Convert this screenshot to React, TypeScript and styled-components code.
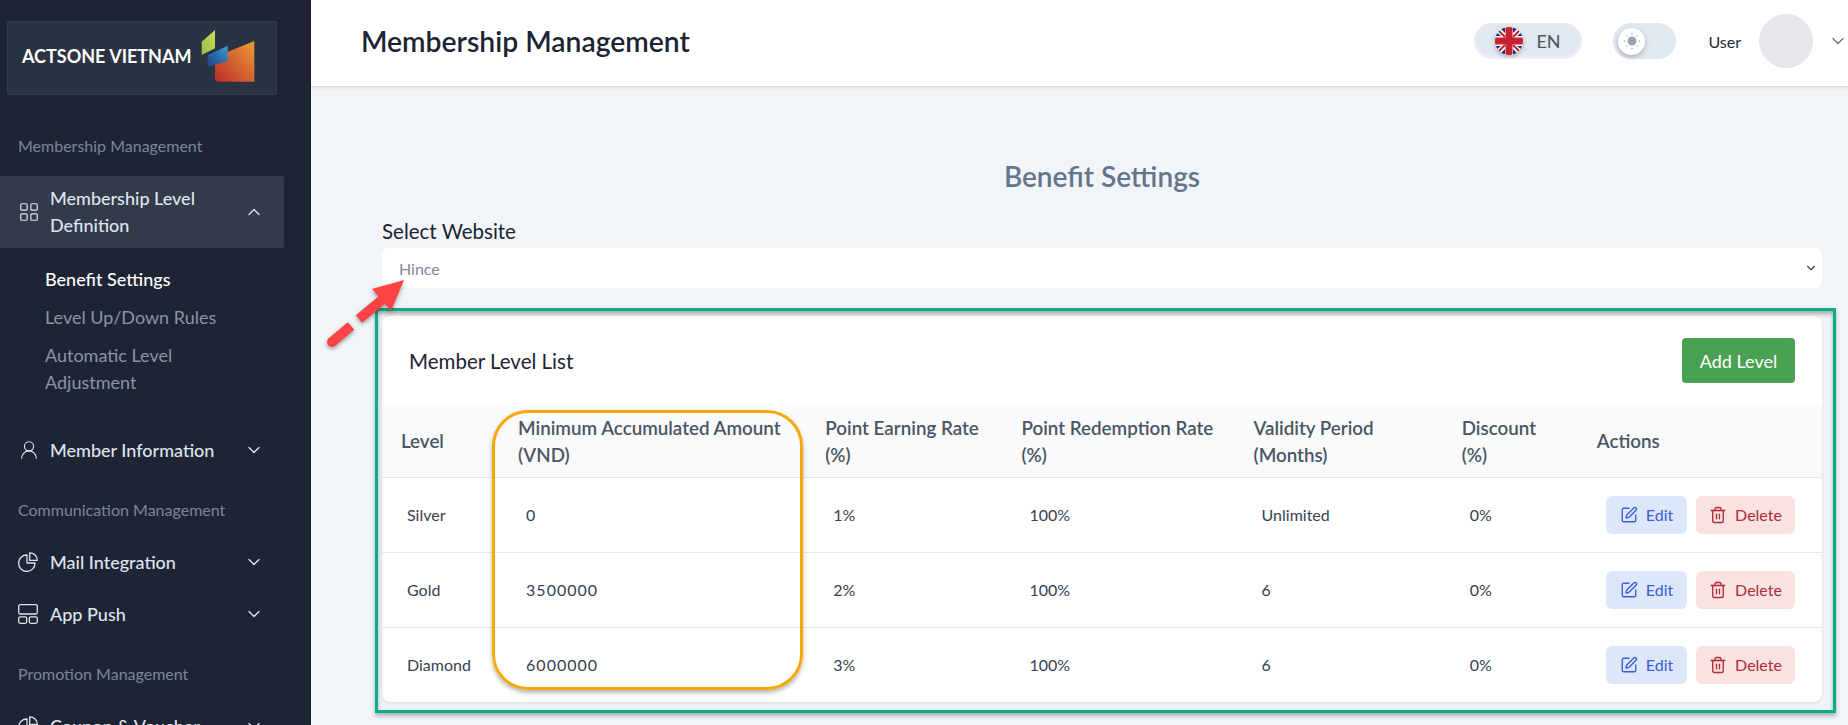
import type { ReactNode } from "react";
import styled, { createGlobalStyle } from "styled-components";
import { ChevronDown, ChevronUp, LayoutGrid, UserRound, SquarePen, Trash2 } from "lucide-react";

const GlobalStyle = createGlobalStyle`
  html, body {
    margin: 0;
    padding: 0;
    height: 725px;
    overflow: hidden;
    background: #f1f5f9;
    font-family: "Lato", "Liberation Sans", sans-serif;
  }
  * { box-sizing: border-box; }
`;

const levels = [
  { name: "Silver", amount: "0", earn: "1%", redeem: "100%", validity: "Unlimited", discount: "0%" },
  { name: "Gold", amount: "3500000", earn: "2%", redeem: "100%", validity: "6", discount: "0%" },
  { name: "Diamond", amount: "6000000", earn: "3%", redeem: "100%", validity: "6", discount: "0%" },
];

const columns = [117, 307, 196, 232, 208, 135, 244];

const Logo = () => (
  <svg width="56" height="56" viewBox="0 0 56 56">
    <defs>
      <linearGradient id="logoBody" x1="0" y1="1" x2="1" y2="0">
        <stop offset="0" stopColor="#b92c2f" />
        <stop offset="1" stopColor="#f09c33" />
      </linearGradient>
      <linearGradient id="logoBlue" x1="0" y1="1" x2="1" y2="0">
        <stop offset="0" stopColor="#1c3f85" />
        <stop offset="1" stopColor="#3f9ad0" />
      </linearGradient>
      <linearGradient id="logoGreen" x1="0" y1="1" x2="1" y2="0">
        <stop offset="0" stopColor="#8fbf45" />
        <stop offset="1" stopColor="#d3dc5c" />
      </linearGradient>
    </defs>
    <path d="M1.7 13.7 L15 2 V20.3 L1.7 27 Z" fill="url(#logoGreen)" />
    <path d="M15 29 L54.3 13 V53.7 H19 Q15 53.7 15 50 Z" fill="url(#logoBody)" />
    <path d="M7.7 27 L27.7 17.7 V33 L7.7 38.7 Z" fill="url(#logoBlue)" />
  </svg>
);

const Flag = () => (
  <svg width="28" height="28" viewBox="0 0 28 28">
    <defs>
      <clipPath id="flagClip"><circle cx="14" cy="14" r="14" /></clipPath>
    </defs>
    <g clipPath="url(#flagClip)">
      <rect width="28" height="28" fill="#fff" />
      <path d="M5 1 L10 6 V1 Z M18 1 V6 L23 1 Z M1 5 V9 L6 9 Z M27 5 L22 9 H27 Z M1 19 V23 L6 19 Z M27 19 H22 L27 23 Z M10 22 L5 27 H10 Z M18 22 V27 H23 Z" fill="#1f2f78" />
      <path d="M1 1 L10 10 M27 1 L18 10 M1 27 L10 18 M27 27 L18 18" stroke="#c8202f" strokeWidth="2" />
      <rect x="10.5" width="7" height="28" fill="#c8202f" />
      <rect y="10.5" width="28" height="7" fill="#c8202f" />
    </g>
  </svg>
);

const Sun = () => (
  <svg width="18" height="18" viewBox="0 0 18 18">
    <circle cx="9" cy="9" r="4.5" fill="#9ca3af" />
    <g fill="#9ca3af">
      <circle cx="9" cy="1.5" r="0.8" /><circle cx="9" cy="16.5" r="0.8" />
      <circle cx="1.5" cy="9" r="0.8" /><circle cx="16.5" cy="9" r="0.8" />
      <circle cx="3.7" cy="3.7" r="0.7" /><circle cx="14.3" cy="3.7" r="0.7" />
      <circle cx="3.7" cy="14.3" r="0.7" /><circle cx="14.3" cy="14.3" r="0.7" />
    </g>
  </svg>
);

const PieIcon = () => (
  <svg width="20" height="20" viewBox="0 0 20 20" fill="none" stroke="currentColor" strokeWidth="1.3" strokeLinejoin="round">
    <path d="M11.7 0.8 A7.6 7.6 0 0 1 19.3 8.4 H11.7 Z" />
    <path d="M9 3 A8.2 8.2 0 1 0 17 11 H9 Z" />
  </svg>
);

const PanelsIcon = () => (
  <svg width="20" height="20" viewBox="0 0 20 20" fill="none" stroke="currentColor" strokeWidth="1.3">
    <rect x="0.7" y="0.7" width="18.6" height="9.3" rx="1.5" />
    <rect x="0.7" y="12.8" width="8" height="6.5" rx="1.5" />
    <rect x="11.3" y="12.8" width="8" height="6.5" rx="1.5" />
  </svg>
);

const NavEntry = ({ icon, label, open, active }: { icon: ReactNode; label: string; open?: boolean; active?: boolean }) => (
  <NavItem $active={active}>
    <NavIcon>{icon}</NavIcon>
    <NavLabel>{label}</NavLabel>
    <NavChevron>{open ? <ChevronUp size={20} strokeWidth={1.6} /> : <ChevronDown size={20} strokeWidth={1.6} />}</NavChevron>
  </NavItem>
);

export default function App() {
  return (
    <Page>
      <GlobalStyle />
      <Sidebar>
        <LogoBox>
          <LogoText>ACTSONE VIETNAM</LogoText>
          <Logo />
        </LogoBox>
        <SectionTitle>Membership Management</SectionTitle>
        <NavEntry active open icon={<LayoutGrid size={22} strokeWidth={1.3} />} label="Membership Level Definition" />
        <SubNav>
          <SubItem $active>Benefit Settings</SubItem>
          <SubItem>Level Up/Down Rules</SubItem>
          <SubItem>Automatic Level Adjustment</SubItem>
        </SubNav>
        <NavEntry icon={<UserRound size={22} strokeWidth={1.3} />} label="Member Information" />
        <SectionTitle $tight>Communication Management</SectionTitle>
        <NavEntry icon={<PieIcon />} label="Mail Integration" />
        <NavEntry icon={<PanelsIcon />} label="App Push" />
        <SectionTitle $tight>Promotion Management</SectionTitle>
        <NavEntry icon={<PieIcon />} label="Coupon & Voucher" />
      </Sidebar>
      <Main>
        <Header>
          <PageTitle>Membership Management</PageTitle>
          <HeaderTools>
            <LangPill>
              <FlagWrap><Flag /></FlagWrap>
              <LangText>EN</LangText>
            </LangPill>
            <ThemeSwitch>
              <ThemeKnob><Sun /></ThemeKnob>
            </ThemeSwitch>
            <UserName>User</UserName>
            <Avatar />
            <UserChevron><ChevronDown size={20} strokeWidth={1.6} /></UserChevron>
          </HeaderTools>
        </Header>
        <Content>
          <Heading>Benefit Settings</Heading>
          <FieldLabel>Select Website</FieldLabel>
          <SelectBox>
            <SelectValue>Hince</SelectValue>
            <ChevronDown size={14} strokeWidth={2} color="#374151" />
          </SelectBox>
          <Card>
            <CardHeader>
              <CardTitle>Member Level List</CardTitle>
              <AddButton>Add Level</AddButton>
            </CardHeader>
            <Table>
              <colgroup>
                {columns.map((w, i) => <col key={i} style={{ width: w }} />)}
              </colgroup>
              <thead>
                <tr>
                  <Th>Level</Th>
                  <Th>Minimum Accumulated Amount (VND)</Th>
                  <Th>Point Earning Rate (%)</Th>
                  <Th>Point Redemption Rate (%)</Th>
                  <Th>Validity Period (Months)</Th>
                  <DiscountTh>Discount (%)</DiscountTh>
                  <Th>Actions</Th>
                </tr>
              </thead>
              <tbody>
                {levels.map((l) => (
                  <tr key={l.name}>
                    <NameCell>{l.name}</NameCell>
                    <AmountCell>{l.amount}</AmountCell>
                    <Td>{l.earn}</Td>
                    <Td>{l.redeem}</Td>
                    <Td>{l.validity}</Td>
                    <Td>{l.discount}</Td>
                    <ActionCell>
                      <EditButton><SquarePen size={18} strokeWidth={1.8} />Edit</EditButton>
                      <DeleteButton><Trash2 size={18} strokeWidth={1.8} />Delete</DeleteButton>
                    </ActionCell>
                  </tr>
                ))}
              </tbody>
            </Table>
          </Card>
        </Content>
      </Main>
      <GreenFrame />
      <OrangeFrame />
      <ArrowMark viewBox="0 0 120 130" width="120" height="130">
        <circle cx="22" cy="82" r="5" fill="#fd4346" />
        <path d="M22 82 L41 66" stroke="#fd4346" strokeWidth="10" fill="none" />
        <path d="M49 59 L73 39" stroke="#fd4346" strokeWidth="10" fill="none" />
        <path d="M94 20 L62 29 L81 51 Z" fill="#fd4346" />
      </ArrowMark>
    </Page>
  );
}

const Page = styled.div`
  display: flex;
  width: 1848px;
  height: 725px;
  overflow: hidden;
  position: relative;
`;

const Sidebar = styled.aside`
  width: 311px;
  flex-shrink: 0;
  background: #1e2434;
  padding-top: 21px;
  overflow: hidden;
`;

const LogoBox = styled.div`
  display: flex;
  align-items: center;
  justify-content: space-between;
  width: 270px;
  height: 74px;
  margin-left: 7px;
  padding: 0 20px 4px 14px;
  background: #2a3342;
  border: 1px solid #333d4d;
  border-radius: 2px;
`;

const LogoText = styled.span`
  color: #fff;
  font-size: 18px;
  font-weight: 700;
  white-space: nowrap;
`;

const SectionTitle = styled.div<{ $tight?: boolean }>`
  color: #7a869c;
  font-size: 16px;
  line-height: 24px;
  padding-left: 18px;
  margin-top: ${(p) => (p.$tight ? "22px" : "39px")};
  margin-bottom: ${(p) => (p.$tight ? "14px" : "18px")};
`;

const NavItem = styled.div<{ $active?: boolean }>`
  display: flex;
  align-items: center;
  width: 284px;
  min-height: ${(p) => (p.$active ? "72px" : "52px")};
  padding-left: 18px;
  padding-right: 20px;
  border-radius: 2px;
  background: ${(p) => (p.$active ? "#333a49" : "transparent")};
  color: #dee4ee;
`;

const NavIcon = styled.span`
  display: flex;
  width: 32px;
  flex-shrink: 0;
`;

const NavLabel = styled.span`
  flex: 1;
  font-size: 18px;
  font-weight: 500;
  line-height: 27px;
`;

const NavChevron = styled.span`
  display: flex;
`;

const SubNav = styled.div`
  display: flex;
  flex-direction: column;
  gap: 11px;
  padding: 18px 60px 28px 45px;
`;

const SubItem = styled.div<{ $active?: boolean }>`
  font-size: 18px;
  line-height: 27px;
  font-weight: ${(p) => (p.$active ? 500 : 400)};
  color: ${(p) => (p.$active ? "#fff" : "#8a94a6")};
`;

const Main = styled.div`
  flex: 1;
  min-width: 0;
  display: flex;
  flex-direction: column;
`;

const Header = styled.header`
  display: flex;
  align-items: center;
  justify-content: space-between;
  height: 86px;
  flex-shrink: 0;
  padding: 0 0 4px 50px;
  background: #fff;
  box-shadow: 0 1px 3px rgba(0, 0, 0, 0.15);
  position: relative;
`;

const PageTitle = styled.h1`
  margin: 0;
  font-size: 28.3px;
  font-weight: 600;
  color: #1c2434;
`;

const HeaderTools = styled.div`
  display: flex;
  align-items: center;
`;

const LangPill = styled.div`
  display: flex;
  align-items: center;
  width: 108px;
  height: 36px;
  padding-left: 21px;
  gap: 13px;
  margin-right: 31px;
  border-radius: 18px;
  background: #e2e8f0;
  box-shadow: inset 0 -2px 4px rgba(255, 255, 255, 0.6);
`;

const FlagWrap = styled.span`
  display: flex;
  border-radius: 50%;
  box-shadow: 0 2px 4px rgba(0, 0, 0, 0.25);
`;

const LangText = styled.span`
  font-size: 18px;
  color: #4b5563;
`;

const ThemeSwitch = styled.div`
  display: flex;
  align-items: center;
  width: 63px;
  height: 36px;
  padding-left: 5px;
  margin-right: 32px;
  border-radius: 18px;
  background: #e2e8f0;
`;

const ThemeKnob = styled.div`
  display: flex;
  align-items: center;
  justify-content: center;
  width: 27px;
  height: 27px;
  border-radius: 50%;
  background: #fff;
  box-shadow: 0 2px 5px rgba(0, 0, 0, 0.25);
`;

const UserName = styled.span`
  font-size: 16px;
  color: #1f2937;
  margin-right: 18px;
`;

const Avatar = styled.div`
  width: 54px;
  height: 54px;
  border-radius: 50%;
  background: #e5e7eb;
  margin-right: 15px;
`;

const UserChevron = styled.span`
  display: flex;
  color: #64748b;
`;

const Content = styled.main`
  flex: 1;
  padding: 73px 26px 0 71px;
`;

const Heading = styled.h2`
  margin: 0 0 26px;
  text-align: center;
  font-size: 28px;
  line-height: 34px;
  font-weight: 600;
  color: #64748b;
`;

const FieldLabel = styled.div`
  font-size: 20.5px;
  line-height: 24px;
  color: #1c2434;
  margin-bottom: 5px;
`;

const SelectBox = styled.div`
  display: flex;
  align-items: center;
  justify-content: space-between;
  height: 40px;
  padding: 0 4px 0 17px;
  border-radius: 6px;
  background: #fff;
`;

const SelectValue = styled.span`
  font-size: 16px;
  color: #808a9c;
`;

const Card = styled.section`
  margin-top: 28px;
  background: #fff;
  border-radius: 8px;
  box-shadow: 0 1px 3px rgba(0, 0, 0, 0.12);
  overflow: hidden;
`;

const CardHeader = styled.div`
  display: flex;
  align-items: center;
  justify-content: space-between;
  height: 89px;
  padding: 0 27px;
`;

const CardTitle = styled.h3`
  margin: 0;
  font-size: 20.5px;
  font-weight: 400;
  color: #1c2434;
`;

const AddButton = styled.button`
  width: 113px;
  height: 45px;
  border: 0;
  border-radius: 4px;
  background: #4ba153;
  color: #fff;
  font: inherit;
  font-size: 18px;
`;

const Table = styled.table`
  width: 100%;
  table-layout: fixed;
  border-collapse: collapse;
`;

const Th = styled.th`
  height: 72px;
  padding: 0 12px 0 19px;
  background: #f9fafb;
  text-align: left;
  font-size: 18.8px;
  line-height: 27px;
  font-weight: 600;
  color: #4b5563;
  border-bottom: 1px solid #e5e7eb;
`;

const DiscountTh = styled(Th)`
  padding-right: 40px;
`;

const Td = styled.td`
  height: 75px;
  padding: 0 4px 0 27px;
  font-size: 16px;
  color: #374151;
  border-bottom: 1px solid #e5e7eb;
  tr:last-child & {
    border-bottom: 0;
  }
`;

const NameCell = styled(Td)`
  padding-left: 25px;
`;

const AmountCell = styled(Td)`
  letter-spacing: 1px;
`;

const ActionCell = styled(Td)`
  padding: 0 27px 0 0;
  text-align: right;
`;

const ActionButton = styled.button`
  display: inline-flex;
  align-items: center;
  justify-content: center;
  gap: 8px;
  height: 38px;
  border: 0;
  border-radius: 6px;
  font: inherit;
  font-size: 16px;
`;

const EditButton = styled(ActionButton)`
  width: 81px;
  margin-right: 9px;
  background: #dde7fa;
  color: #3b5bdb;
`;

const DeleteButton = styled(ActionButton)`
  width: 99px;
  background: #f9e2e2;
  color: #b02a37;
`;

const GreenFrame = styled.div`
  position: absolute;
  left: 375px;
  top: 308px;
  width: 1461px;
  height: 405px;
  border: 3px solid #0bab8c;
  box-shadow: 0 3px 4px rgba(0, 0, 0, 0.28), inset 0 3px 4px rgba(0, 0, 0, 0.3);
  pointer-events: none;
`;

const OrangeFrame = styled.div`
  position: absolute;
  left: 492px;
  top: 410px;
  width: 311px;
  height: 280px;
  border: 3px solid #f9a80a;
  border-radius: 36px;
  box-shadow: 0 3px 4px rgba(0, 0, 0, 0.28);
  pointer-events: none;
`;

const ArrowMark = styled.svg`
  position: absolute;
  left: 310px;
  top: 260px;
  filter: drop-shadow(0 2px 2px rgba(0, 0, 0, 0.35));
  pointer-events: none;
`;
